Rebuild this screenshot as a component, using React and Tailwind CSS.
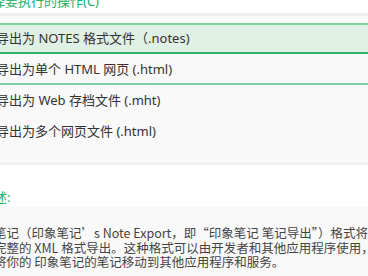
import React from 'react';

const font = { fontFamily: '"Noto Sans", "Noto Sans CJK SC", sans-serif' };
const cjk = { fontFamily: '"Noto Sans CJK SC", "Noto Sans", sans-serif' };

const options = [
  { label: '导出为 NOTES 格式文件（.notes)', state: 'selected' },
  { label: '导出为单个 HTML 网页 (.html)', state: 'hover' },
  { label: '导出为 Web 存档文件 (.mht)', state: 'none' },
  { label: '导出为多个网页文件 (.html)', state: 'none' },
];

const Option = ({ label, state }) => {
  let cls = 'border-transparent';
  if (state === 'selected') cls = 'bg-[#dff0e5] border-t-[#7ed3a0] border-b-[#2fb36a]';
  if (state === 'hover') cls = 'border-t-transparent border-b-[#7ed3a0]';
  return (
    <div className={`h-[31px] border-y-2 flex items-center whitespace-nowrap ${cls}`}>
      <span className="-ml-[4px] text-[13px] text-[#333]">{label}</span>
    </div>
  );
};

export default function App() {
  return (
    <div className="w-[368px] h-[276px] overflow-hidden bg-white flex flex-col" style={font}>
      {/* action heading */}
      <div className="h-[13px] flex items-end whitespace-nowrap">
        <span className="-ml-[21px] text-[13px] leading-[16px] text-[#25b061] pb-[4px]">选择要执行的操作(C)</span>
      </div>
      <div className="h-[3px] bg-[#f0f0f0]" />

      {/* options list */}
      <div className="h-[146px] bg-[#f9f9f9] pt-[7px] flex flex-col">
        {options.map(o => (
          <Option key={o.label} {...o} />
        ))}
      </div>
      <div className="h-[3px] bg-[#f0f0f0]" />

      {/* description heading */}
      <div className="h-[42px] flex items-center whitespace-nowrap pt-[24px]">
        <span className="-ml-[19px] text-[13px] text-[#25b061]">描述:</span>
      </div>

      {/* description body */}
      <div className="flex-1 bg-[#f9f9f9] pt-[19px] whitespace-nowrap text-[12.5px] leading-[14.5px] text-[#444]" style={cjk}>
        <div className="-ml-[6px]">笔记（印象笔记’s Note Export，即“印象笔记 笔记导出”）格式将</div>
        <div className="-ml-[6px]">完整的 XML 格式导出。这种格式可以由开发者和其他应用程序使用，以</div>
        <div className="-ml-[6px]">将你的 印象笔记的笔记移动到其他应用程序和服务。</div>
      </div>
    </div>
  );
}
